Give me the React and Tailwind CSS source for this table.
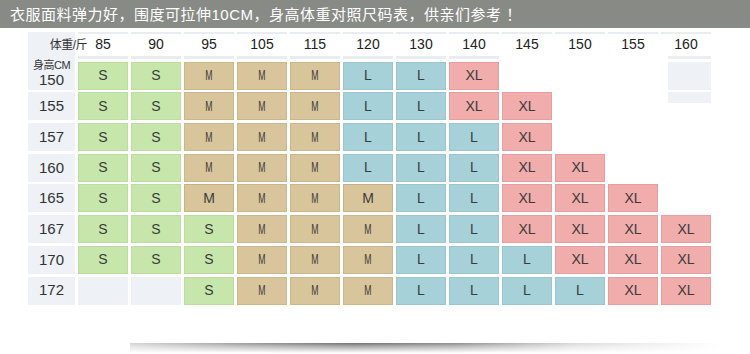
import React from 'react'

const weights = ['85', '90', '95', '105', '115', '120', '130', '140', '145', '150', '155', '160']

// g = grey filler cell, n = nothing
const rows = [
  { h: '155', cells: ['S', 'S', 'M', 'M', 'M', 'L', 'L', 'XL', 'XL', 'n', 'n', 'gs'] },
  { h: '157', cells: ['S', 'S', 'M', 'M', 'M', 'L', 'L', 'L', 'XL', 'n', 'n', 'n'] },
  { h: '160', cells: ['S', 'S', 'M', 'M', 'M', 'L', 'L', 'L', 'XL', 'XL', 'n', 'n'] },
  { h: '165', cells: ['S', 'S', 'Mw', 'M', 'M', 'Mw', 'L', 'L', 'XL', 'XL', 'XL', 'n'] },
  { h: '167', cells: ['S', 'S', 'S', 'M', 'M', 'M', 'L', 'L', 'XL', 'XL', 'XL', 'XL'] },
  { h: '170', cells: ['S', 'S', 'S', 'M', 'M', 'M', 'L', 'L', 'L', 'XL', 'XL', 'XL'] },
  { h: '172', cells: ['g', 'g', 'S', 'M', 'M', 'M', 'L', 'L', 'L', 'L', 'XL', 'XL'] },
]

const first = ['S', 'S', 'M', 'M', 'M', 'L', 'L', 'XL', 'n', 'n', 'n', 'gf']

const tone = {
  S: 'bg-[#c7e6ab] border-[#bddc9f]',
  M: 'bg-[#d8c59b] border-[#cbb78b]',
  Mw: 'bg-[#d8c59b] border-[#c6b285]',
  L: 'bg-[#a7d1d9] border-[#9cc6cf]',
  XL: 'bg-[#f1acac] border-[#e69e9e]',
}

const Cell = ({ v }) => {
  if (v === 'n') return <div />
  if (v === 'g') return <div className="bg-[#eef1f6]" />
  if (v === 'gf') return <div className="ml-[7px] bg-[#eef1f6]" />
  if (v === 'gs') return <div className="ml-[7px] h-[11px] bg-[#eef1f6]" />
  return (
    <div className={`flex items-center justify-center border text-[14px] text-[#3b3b3b] ${tone[v]}`}>
      {v === 'M' ? (
        <span className="inline-block scale-x-[0.62]">M</span>
      ) : (
        <span>{v === 'Mw' ? 'M' : v}</span>
      )}
    </div>
  )
}

export default function App() {
  return (
    <div
      className="relative h-[354px] w-[750px] overflow-hidden bg-white"
      style={{ fontFamily: '"Liberation Sans", "Noto Sans CJK SC", sans-serif' }}
    >
      {/* title bar */}
      <div className="flex h-[28px] items-center bg-[#888a86] pl-[10px] pt-[2px] text-[15px] tracking-[0.5px] text-white">
        衣服面料弹力好，围度可拉伸10CM，身高体重对照尺码表，供亲们参考 ！
      </div>

      {/* size chart */}
      <div className="ml-[28px] mt-[4px] grid grid-cols-[47px_repeat(12,50px)] grid-rows-[27px_repeat(8,28px)] gap-x-[3px] gap-y-[2.7px]">
        <div className="row-span-2 flex flex-col bg-[#eef1f6] text-[#333]">
          <div className="-mr-[12px] flex h-[27px] items-center justify-end whitespace-nowrap pb-[2px] text-[12px] tracking-[-0.5px]">
            体重/斤
          </div>
          <div className="mt-[1px] text-center text-[11px] leading-[11px] tracking-[-0.5px]">身高CM</div>
          <div className="text-center text-[15px] leading-[17px]">150</div>
        </div>

        {weights.map((w, i) => (
          <div key={w} className="flex flex-col">
            <div className="h-[2px] bg-[#e9ecf1]" />
            <div className="flex flex-1 items-center justify-center pb-[1px] text-[14px] text-[#222]">{w}</div>
            <div
              className={`h-[3px] ${
                i === 11 ? 'ml-[7px] bg-[#eaedf2]' : i < 8 ? 'bg-[#e9ecf1]' : 'bg-transparent'
              }`}
            />
          </div>
        ))}

        {first.map((v, i) => (
          <Cell key={'f' + i} v={v} />
        ))}

        {rows.map((r) => (
          <React.Fragment key={r.h}>
            <div className="flex items-center justify-center bg-[#eef1f6] text-[15px] text-[#333]">{r.h}</div>
            {r.cells.map((v, i) => (
              <Cell key={r.h + i} v={v} />
            ))}
          </React.Fragment>
        ))}
      </div>

      {/* paper shadow */}
      <div className="ml-[130px] mt-[38px] h-[10px] w-[590px] bg-[linear-gradient(to_bottom,rgba(255,255,255,0)_0%,rgba(255,255,255,0.4)_35%,rgba(255,255,255,1)_100%),linear-gradient(to_right,#d6d6d6_0%,#9a9a9a_20%,#727272_38%,#8f8f8f_55%,#dadada_75%,#ffffff_100%)]" />
    </div>
  )
}
